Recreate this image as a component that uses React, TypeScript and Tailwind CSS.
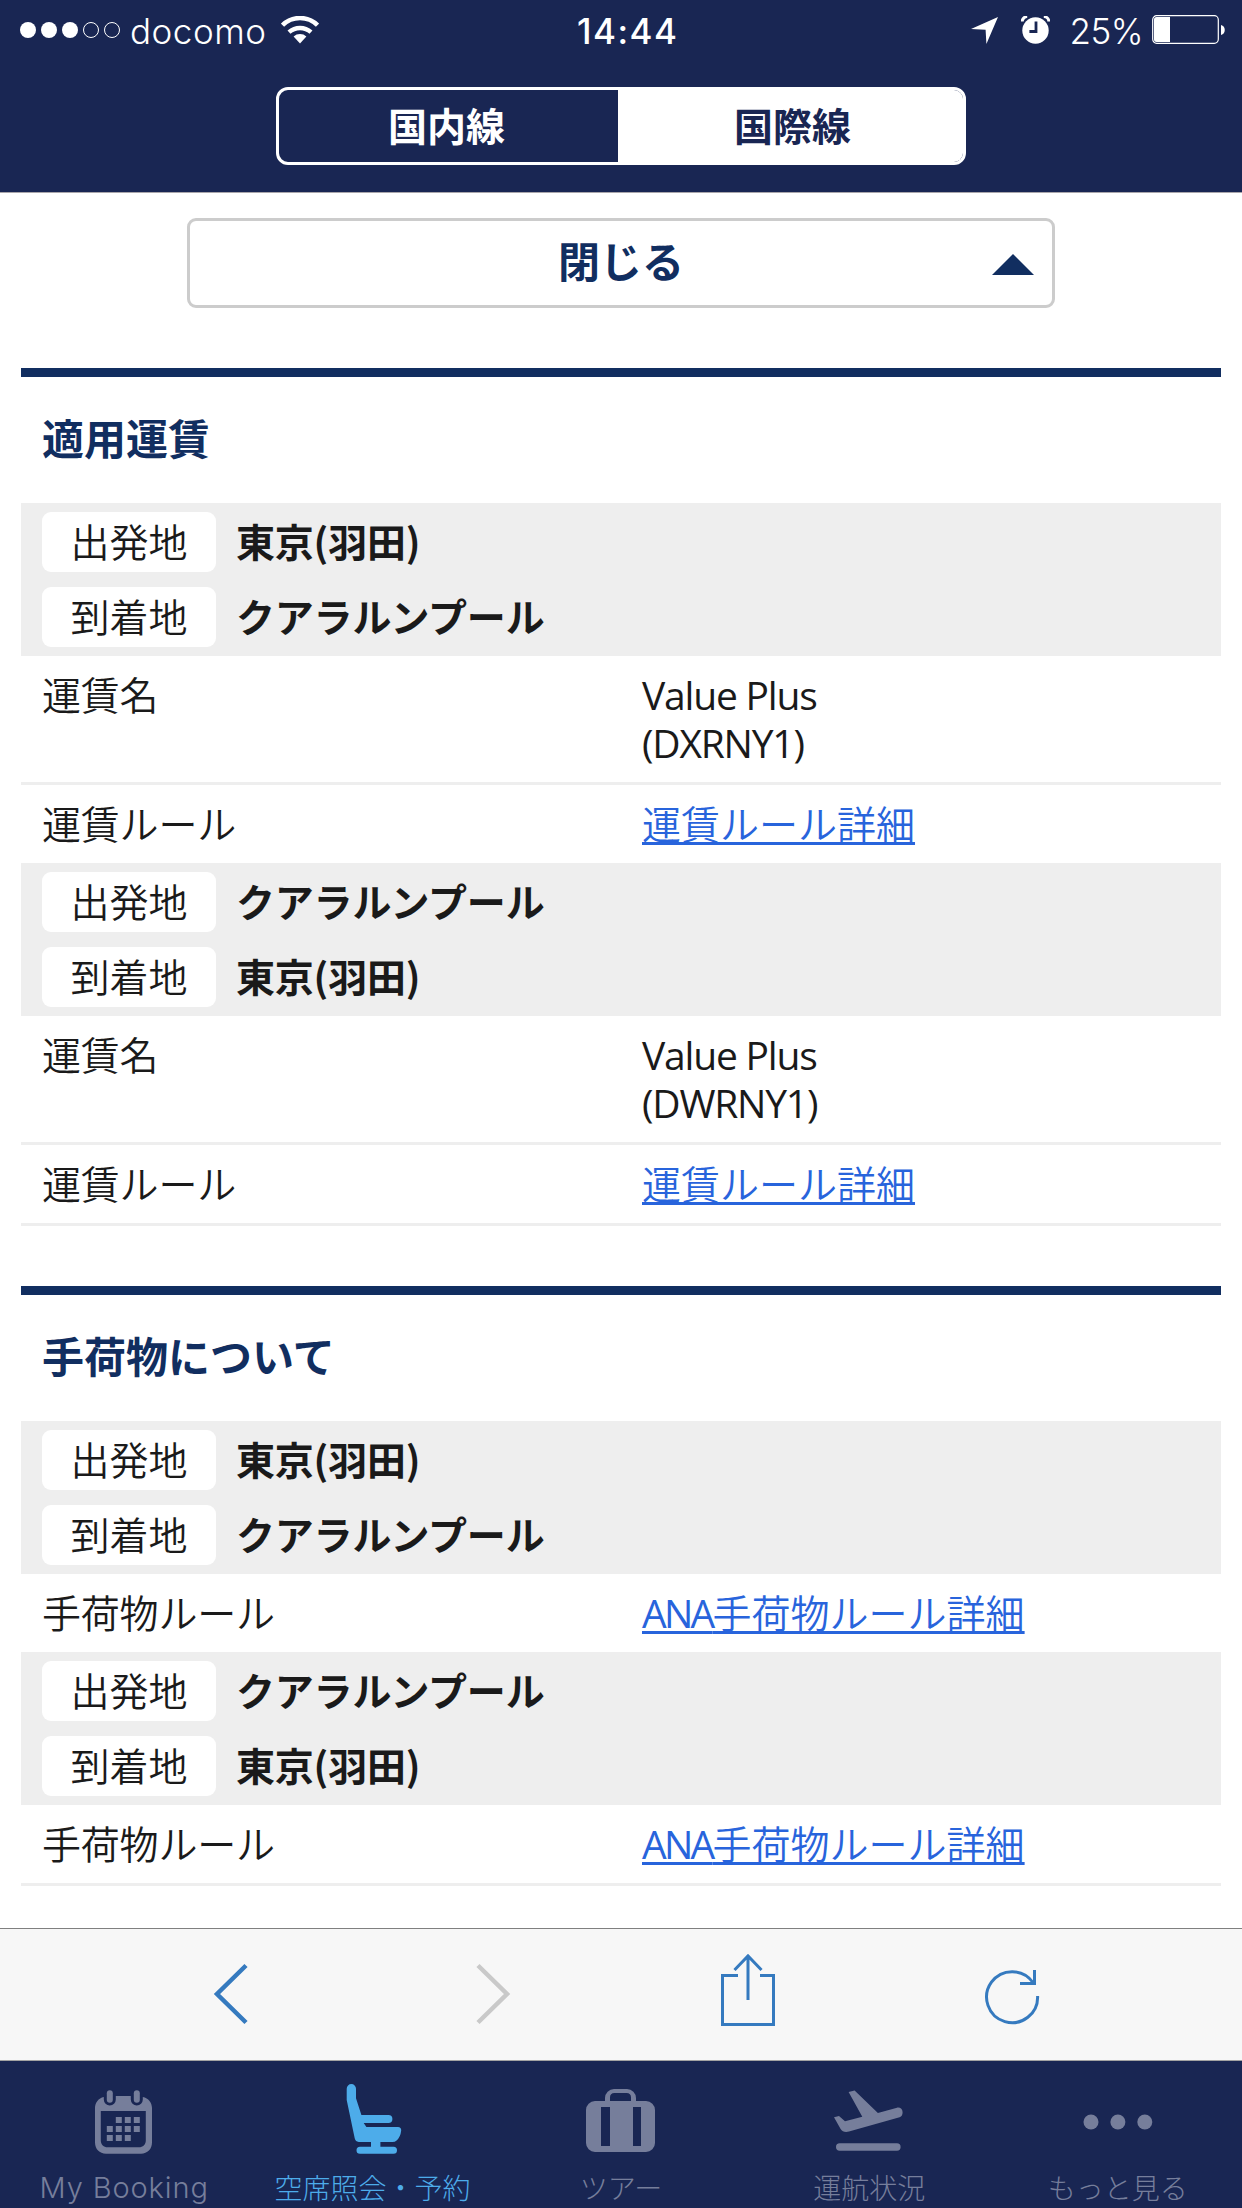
import type { ReactNode } from "react";

type Leg = {
  from: string;
  to: string;
  rows: { label: string; lines?: string[]; link?: ReactNode }[];
};

const TOKYO = "東京(羽田)";
const KUALA_LUMPUR = "クアラルンプール";

const fareRows = (code: string) => [
  { label: "運賃名", lines: ["Value Plus", `(${code})`] },
  { label: "運賃ルール", link: "運賃ルール詳細" },
];

const baggageRows = [
  {
    label: "手荷物ルール",
    link: (
      <>
        <span className="font-['Open_Sans'] font-normal leading-none tracking-[-2.7px]">ANA</span>
        手荷物ルール詳細
      </>
    ),
  },
];

const fareLegs: Leg[] = [
  { from: TOKYO, to: KUALA_LUMPUR, rows: fareRows("DXRNY1") },
  { from: KUALA_LUMPUR, to: TOKYO, rows: fareRows("DWRNY1") },
];

const baggageLegs: Leg[] = [
  { from: TOKYO, to: KUALA_LUMPUR, rows: baggageRows },
  { from: KUALA_LUMPUR, to: TOKYO, rows: baggageRows },
];

const StatusBar = () => (
  <div className="flex h-[60px] items-center pl-5 pr-[17px] text-white">
    <div className="flex w-[557px] items-center">
      <svg width="100" height="16" viewBox="0 0 100 16" fill="white">
        <circle cx="8" cy="8" r="8" />
        <circle cx="29" cy="8" r="8" />
        <circle cx="50" cy="8" r="8" />
        <circle cx="71" cy="8" r="7.5" fill="none" stroke="white" />
        <circle cx="92" cy="8" r="7.5" fill="none" stroke="white" />
      </svg>
      <span className="ml-[10px] pt-[3px] font-['Inter'] text-[35px] font-light leading-none tracking-[0.5px]">
        docomo
      </span>
      <svg className="ml-[15px]" width="38" height="28" viewBox="0 0 38 28" fill="none">
        <path d="M1.5 9.2a25 25 0 0 1 35 0" stroke="white" strokeWidth="4.6" />
        <path d="M8 16.2a16.5 16.5 0 0 1 22 0" stroke="white" strokeWidth="4.4" />
        <path d="M12.6 20.6a9.5 9.5 0 0 1 12.8 0L19 27.4z" fill="white" />
      </svg>
    </div>
    <div className="pt-[3px] font-['Inter'] text-[35px] font-medium leading-none tracking-[1.5px]">
      14:44
    </div>
    <div className="ml-auto flex items-center">
      <svg width="27" height="27" viewBox="0 0 27 27" fill="white">
        <path d="M27 0 15.4 27l-.8-14.2L0 12z" />
      </svg>
      <svg className="ml-[23px]" width="29" height="28" viewBox="0 0 29 28">
        <circle cx="14.5" cy="14.5" r="13.2" fill="white" />
        <path d="M1.2 5.6a5 5 0 0 1 5-5M27.8 5.6a5 5 0 0 0-5-5" stroke="white" strokeWidth="3" fill="none" />
        <path d="M15 5.5v10H8.4" stroke="#192653" strokeWidth="2.8" fill="none" />
      </svg>
      <span className="ml-[19px] pt-[3px] font-['Inter'] text-[35px] font-light leading-none tracking-[-0.5px]">
        25%
      </span>
      <svg className="ml-[9px]" width="73" height="30" viewBox="0 0 73 30">
        <rect x=".7" y=".7" width="65.6" height="27.6" rx="4" fill="none" stroke="white" strokeWidth="1.2" />
        <path d="M4.5 2H18v25H4.5A2.5 2.5 0 0 1 2 24.5v-20A2.5 2.5 0 0 1 4.5 2z" fill="white" />
        <path d="M69 10c5 1 5 9 0 10z" fill="white" />
      </svg>
    </div>
  </div>
);

const Header = () => (
  <header className="h-[193px] shrink-0 border-b border-[#a9a6ab] bg-[#192653]">
    <StatusBar />
    <div className="mx-auto mt-[27px] flex h-[78px] w-[690px] overflow-hidden rounded-[12px] border-[3px] border-white text-[39px] font-bold">
      <button type="button" className="w-[339px] pb-1 pr-1 leading-none text-white">
        国内線
      </button>
      <button type="button" className="flex-1 bg-white pb-1 pl-1 leading-none text-[#192653]">
        国際線
      </button>
    </div>
  </header>
);

const Place = ({ label, name }: { label: string; name: string }) => (
  <div className="flex items-center gap-5">
    <span className="flex h-[60px] w-[174px] items-center justify-center rounded-[9px] bg-white pb-[3px] leading-none">
      {label}
    </span>
    <span className="pb-[3px] font-bold leading-none tracking-[-0.2px]">{name}</span>
  </div>
);

const Section = ({ title, legs }: { title: string; legs: Leg[] }) => (
  <section className="mx-[21px] mb-[60px] border-t-[9px] border-[#112e60]">
    <h2 className="flex h-[126px] items-center pb-[7px] pl-[21px] text-[42px] font-bold leading-none text-[#112e60]">
      {title}
    </h2>
    {legs.map((leg, i) => (
      <div key={i}>
        <div className="flex h-[153px] flex-col gap-[15px] bg-[#eee] pl-[21px] pt-[9px]">
          <Place label="出発地" name={leg.from} />
          <Place label="到着地" name={leg.to} />
        </div>
        {leg.rows.map((row, j) => {
          const last = j === leg.rows.length - 1 && i < legs.length - 1;
          // the next leg's grey panel closes the row, so only the final leg keeps its line
          return (
            <div
              key={row.label}
              className={`flex px-[21px] pb-[17px] pt-[13px] leading-[48px] ${
                last ? "" : "border-b-[3px] border-[#eee]"
              }`}
            >
              <div className="w-[600px] tracking-[-0.2px]">{row.label}</div>
              <div>
                {row.lines?.map((line) => (
                  <div
                    key={line}
                    className="h-12 font-['Open_Sans'] font-normal leading-[52px] tracking-[-1.2px]"
                  >
                    {line}
                  </div>
                ))}
                {row.link && (
                  <a
                    href="#"
                    className="block h-12 text-[#2864dc] underline decoration-[2.5px] underline-offset-[3px] [text-decoration-skip-ink:none]"
                  >
                    {row.link}
                  </a>
                )}
              </div>
            </div>
          );
        })}
      </div>
    ))}
  </section>
);

const Toolbar = () => (
  <div className="flex h-[133px] shrink-0 border-b border-t border-b-[#a3a3a3] border-t-[#808080] bg-[#f7f7f7] pl-[213px] pt-[24px]">
    <svg width="36" height="80" viewBox="0 0 36 80" fill="none" stroke="#357abf" strokeWidth="4.5">
      <path d="M33 12.5 4 41l29 28.5" />
    </svg>
    <svg className="ml-[226px]" width="36" height="80" viewBox="0 0 36 80" fill="none" stroke="#c9c9c9" strokeWidth="4.5">
      <path d="m3 12.5 29 28.5L3 69.5" />
    </svg>
    <svg className="ml-[208px]" width="60" height="80" viewBox="0 0 60 80" fill="none" stroke="#357abf" strokeWidth="3">
      <path d="M19 22.5H3.5v49h51v-49H41M29 47V2M15.5 17 29 3l13.5 14" />
    </svg>
    <svg className="ml-[204px]" width="60" height="80" viewBox="0 0 60 80" fill="none" stroke="#357abf" strokeWidth="3">
      <path d="M54.6 43A25.5 25.5 0 1 1 50 29.5" />
      <path d="M51.5 17v13.5H37" />
    </svg>
  </div>
);

const TabIcon = ({ children }: { children: ReactNode }) => (
  <svg width="72" height="72" viewBox="0 0 72 72" fill="currentColor">
    {children}
  </svg>
);

// filled days of the calendar, as [column, row]
const days = [
  [1, 0], [2, 0], [3, 0],
  [0, 1], [1, 1], [2, 1], [3, 1],
  [0, 2], [1, 2], [2, 2],
];

const CalendarIcon = () => (
  <TabIcon>
    <path
      fillRule="evenodd"
      d="M15.8 14v2.5a6 6 0 0 0 12 0V13h15v3.5a6 6 0 0 0 12 0V14C60.5 15 64 20 64 25v34.5C64 66 59.5 70.7 53 70.7H18C11.5 70.7 7 66 7 59.5V25c0-5 3.5-10 8.8-11zM12.8 28v29.5c0 4 3 6.8 6.8 6.8H51c3.8 0 6.8-2.8 6.8-6.8V28z"
    />
    <rect x="18.8" y="7.3" width="6" height="12.4" rx="3" />
    <rect x="45.8" y="7.3" width="6" height="12.4" rx="3" />
    {days.map(([col, row]) => (
      <rect key={`${col}-${row}`} x={18.8 + col * 9} y={34 + row * 9} width="6" height="6" />
    ))}
  </TabIcon>
);

const SeatIcon = () => (
  <TabIcon>
    <path d="M9.7 5.7a4.65 4.65 0 0 1 9.3 0v9.6L24.4 32h27a4 4 0 0 1 0 8H26.7l2.7 4H61q3.3 0 3.2 3.5-.7 6.5-4.6 10-1.6 1.5-4.2 1.5H43.4v4.7h13.1a3.5 3.5 0 0 1 0 7H23a3.5 3.5 0 0 1 0-7h11V59H21.7q-3.200-.3-4-3.700L9.700 17z" />
  </TabIcon>
);

const SuitcaseIcon = () => (
  <TabIcon>
    <path
      fillRule="evenodd"
      d="M20 18v-3a9 9 0 0 1 9-9h13a9 9 0 0 1 9 9v3h10a9 9 0 0 1 9 9v33a9 9 0 0 1-9 9H10a9 9 0 0 1-9-9V27a9 9 0 0 1 9-9zM25 18h21v-3.5q0-4.5-4.5-4.5h-12Q25 10 25 14.5zM16 24v39h9V24zM48 24v39h8V24z"
    />
  </TabIcon>
);

const TakeoffIcon = () => (
  <TabIcon>
    <path d="m15.6 9 6-1.5L44.9 30 64 24.7c3-.7 5.6 1.5 5.6 4.6 0 2.6-1 4.3-3 5L16 48.5c-3.5 1-6.8.2-8.4-2.5L1 34.3 6 33l6 5.3 17.3-4.6z" />
    <rect x="3" y="60.3" width="64.6" height="7.4" rx="3.7" />
  </TabIcon>
);

const MoreIcon = () => (
  <TabIcon>
    <circle cx="9" cy="39" r="7.5" />
    <circle cx="35.9" cy="39" r="7.5" />
    <circle cx="62.8" cy="39" r="7.5" />
  </TabIcon>
);

const tabs = [
  {
    label: <span className="font-['Inter'] text-[29px] leading-none tracking-[0.9px]">My Booking</span>,
    icon: <CalendarIcon />,
  },
  { label: "空席照会・予約", icon: <SeatIcon />, active: true },
  { label: "ツアー", icon: <SuitcaseIcon /> },
  { label: "運航状況", icon: <TakeoffIcon /> },
  { label: "もっと見る", icon: <MoreIcon /> },
];

const TabBar = () => (
  <nav className="flex h-[147px] shrink-0 bg-[#192653] text-[28px] font-light leading-none">
    {tabs.map((tab, i) => (
      <div
        key={i}
        className={`flex w-1/5 flex-col items-center pt-[22px] ${tab.active ? "text-[#4dacea]" : "text-[#767e9b]"}`}
      >
        <div className="h-[90px]">{tab.icon}</div>
        {tab.label}
      </div>
    ))}
  </nav>
);

export default function App() {
  return (
    <div className="flex h-[2208px] w-[1242px] flex-col overflow-hidden bg-white font-['Noto_Sans_CJK_JP',sans-serif] text-[39px] font-[350] text-[#1a1a1a]">
      <Header />
      <main className="min-h-0 flex-1 overflow-hidden">
        <button
          type="button"
          className="relative mx-auto mb-[60px] mt-[25px] flex h-[90px] w-[868px] items-center justify-center rounded-[9px] border-[3px] border-[#ccc] pb-1.5 text-[42px] font-bold leading-none text-[#112e60]"
        >
          閉じる
          <svg className="absolute right-[18px] top-[33px]" width="42" height="21" viewBox="0 0 42 21" fill="currentColor">
            <path d="M21 0 42 21H0z" />
          </svg>
        </button>
        <Section title="適用運賃" legs={fareLegs} />
        <Section title="手荷物について" legs={baggageLegs} />
      </main>
      <Toolbar />
      <TabBar />
    </div>
  );
}
